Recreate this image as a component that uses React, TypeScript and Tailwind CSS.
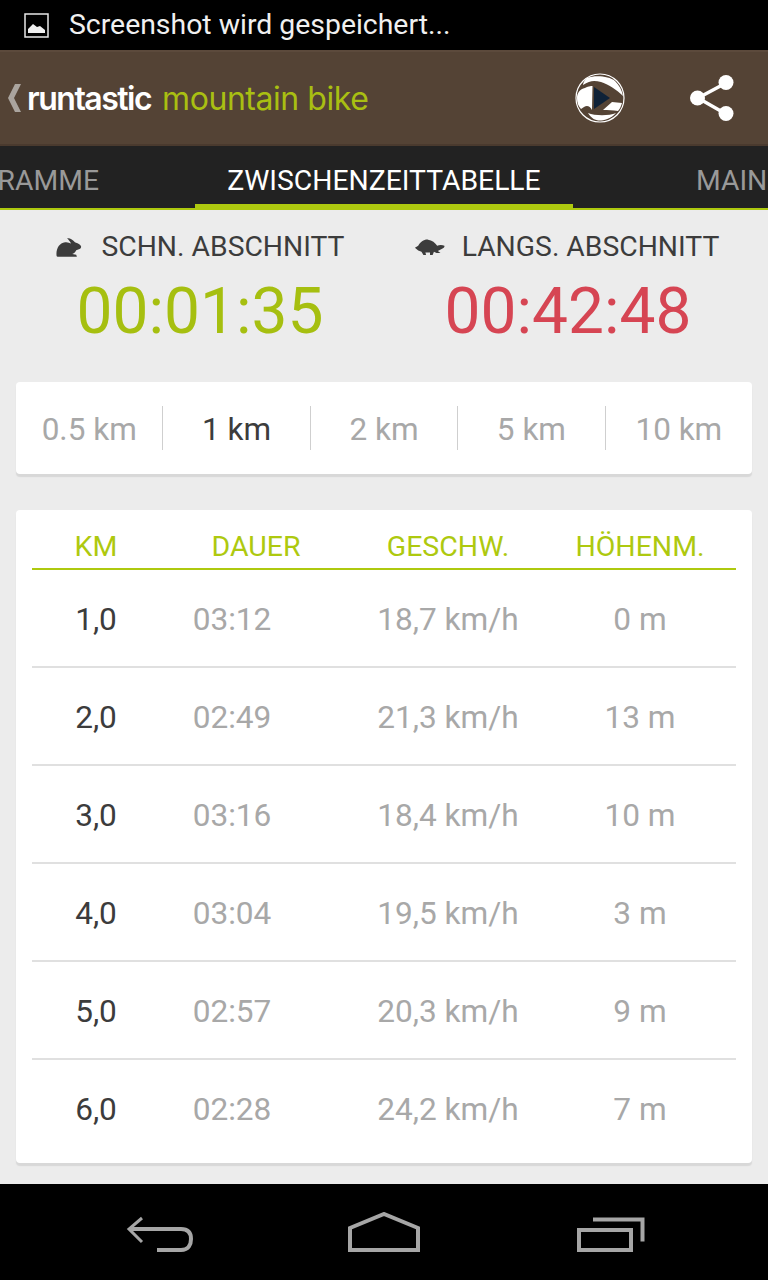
const splits = [
  { km: "1,0", time: "03:12", speed: "18,7 km/h", height: "0 m" },
  { km: "2,0", time: "02:49", speed: "21,3 km/h", height: "13 m" },
  { km: "3,0", time: "03:16", speed: "18,4 km/h", height: "10 m" },
  { km: "4,0", time: "03:04", speed: "19,5 km/h", height: "3 m" },
  { km: "5,0", time: "02:57", speed: "20,3 km/h", height: "9 m" },
  { km: "6,0", time: "02:28", speed: "24,2 km/h", height: "7 m" },
];

const distances = ["0.5 km", "1 km", "2 km", "5 km", "10 km"];

const Rabbit = () => (
  <svg width="28" height="21" viewBox="20 18 84 64" fill="#3c3c3c">
    <path d="M24 74C22 55 32 36 50 34C58 33 64 36 68 38C66 32 60 26 56 22C64 20 74 26 80 34C84 36 92 38 96 42C100 46 100 50 96 54C92 56 88 56 84 58C82 64 76 68 72 70L84 72L86 78L30 78C26 78 24 76 24 74Z" />
  </svg>
);

const Turtle = () => (
  <svg width="32" height="19" viewBox="12 22 96 58" fill="#3c3c3c">
    <path d="M14 52L24 46C30 34 42 26 54 27C66 28 76 36 82 46C88 42 98 42 104 46C106 50 100 54 94 56L84 62L92 68L80 68L72 64L68 74L60 74L60 66L46 66L48 74L40 74L34 64L24 60Z" />
  </svg>
);

export default function App() {
  return (
    <div className="w-[768px] h-[1280px] flex flex-col bg-[#ececec] overflow-hidden font-['Roboto',sans-serif]">
      {/* Status bar */}
      <div className="h-[50px] bg-black flex items-center pl-6 gap-[20px]">
        <svg width="25" height="25" viewBox="0 0 25 25">
          <rect x="1" y="1" width="23" height="23" fill="none" stroke="#e8e8e8" strokeWidth="1.5" />
          <path d="M4 20v-4l5-5 4 3 3-1 5 4v3z" fill="#f0f0f0" />
        </svg>
        <span className="text-[#f0f0f0] text-[28.4px]">Screenshot wird gespeichert...</span>
      </div>

      {/* Action bar */}
      <div className="h-[96px] bg-[#544335] border-t-2 border-b-2 border-t-[#5c4a3c] border-b-[#4a3a2e] flex items-center">
        <svg className="ml-[8px]" width="14" height="28" viewBox="0 0 14 28">
          <path d="M7 0h6L6 14l7 14H7L0 14z" fill="#aaa49e" />
        </svg>
        <span className="ml-[5px] text-white text-[32px] font-semibold font-['Inter',sans-serif] tracking-[-1.5px] pt-[2px]">runtastic</span>
        <span className="ml-[11px] text-[#a9bf12] text-[32px] font-['Inter',sans-serif] tracking-[-0.45px] pt-[2px]">mountain bike</span>
        <div className="ml-auto flex items-center">
          {/* app badge */}
          <svg width="50" height="50" viewBox="0 0 50 50">
            <circle cx="25" cy="25" r="24" fill="#544335" stroke="#fff" strokeWidth="1.2" />
            <path d="M12 5C20 2 34 3 40 8C44 12 47 17 48 23C42 17 33 11 26 9C20 7.5 15 7 8 12C8 9 10 7 12 5Z" fill="#fff" />
            <path d="M2 25C2 20 5 16 10 15C14 13 17 13 17.500 13L17 37C15 33 12 32 9 34L6 36C3 33 2 29 2 25Z" fill="#fff" />
            <path d="M28 37L37 29L47 30C46 33 45 36 43 38C38 37 33 37 28 37Z" fill="#fff" />
            <path d="M13 40C20 43 34 43 41 40C36 46 28 47.500 25 47.500C20 47.500 16 45 13 40Z" fill="#fff" />
            <path d="M19 14L35 25L19 36Z" fill="#0f2238" />
          </svg>
          <svg className="ml-[65px] mr-[32px]" width="46" height="46" viewBox="0 0 46 46" fill="#fff">
            <circle cx="36" cy="7.500" r="7.500" />
            <circle cx="7.500" cy="23" r="7.500" />
            <circle cx="36" cy="38.500" r="7.500" />
            <path d="M8 23L36 8M8 23l28 16" stroke="#fff" strokeWidth="3.500" />
          </svg>
        </div>
      </div>

      {/* Tabs */}
      <div className="h-[64px] bg-[#222222] border-b-2 border-[#aec90f] flex items-center text-[28.3px] leading-none whitespace-nowrap">
        <div className="w-[99px] flex justify-end text-[#999999] pt-[8px]">
          <span>RAMME</span>
        </div>
        <div className="ml-[96px] w-[378px] h-[62px] border-b-[4px] border-[#aec90f] flex items-center justify-center text-white pt-[12px] shrink-0">
          <span>ZWISCHENZEITTABELLE</span>
        </div>
        <span className="ml-[123px] text-[#999999] pt-[8px]">MAIN</span>
      </div>

      {/* Fastest / slowest */}
      <div className="flex pt-[22px] h-[172px] px-[16px]">
        <div className="w-[368px] flex flex-col items-center">
          <div className="flex items-center gap-[18px] text-[28.3px] leading-[30px] text-[#3c3c3c]">
            <Rabbit />
            <span>SCHN. ABSCHNITT</span>
          </div>
          <div className="mt-[11px] text-[#a6bf10] text-[64px] leading-[78px]">00:01:35</div>
        </div>
        <div className="w-[368px] flex flex-col items-center">
          <div className="flex items-center gap-[16px] text-[28.3px] leading-[30px] text-[#3c3c3c] pr-[3px]">
            <Turtle />
            <span>LANGS. ABSCHNITT</span>
          </div>
          <div className="mt-[11px] text-[#d64553] text-[64px] leading-[78px]">00:42:48</div>
        </div>
      </div>

      {/* Distance filter */}
      <div className="mx-[16px] h-[92px] bg-white rounded-[4px] shadow-[0_3px_1px_#d8d8d8] flex items-center">
        {distances.map((d, i) => (
          <div
            key={d}
            className={`flex-1 h-[44px] flex items-center justify-center text-[31.5px] pt-[3px] ${i > 0 ? "border-l border-[#cfcfcf]" : ""} ${i === 1 ? "text-[#3c3c3c]" : "text-[#a8a8a8]"}`}
          >
            {d}
          </div>
        ))}
      </div>

      {/* Split table */}
      <div className="mt-[36px] mx-[16px] h-[653px] bg-white rounded-[4px] shadow-[0_3px_1px_#d8d8d8] px-[16px]">
        <div className="h-[60px] grid grid-cols-[128px_192px_192px_192px] items-end pb-[6px] border-b-2 border-[#aec90f] text-[28.5px] leading-[30px] text-[#aec90f] text-center">
          <span>KM</span>
          <span>DAUER</span>
          <span>GESCHW.</span>
          <span>HÖHENM.</span>
        </div>
        {splits.map((s, i) => (
          <div
            key={s.km}
            className={`h-[98px] grid grid-cols-[128px_192px_192px_192px] items-center text-center text-[31.6px] text-[#a8a8a8] pt-[3px] border-b-2 ${i < 5 ? "border-[#e0e0e0]" : "border-transparent"}`}
          >
            <span className="text-[#3c3c3c]">{s.km}</span>
            <span className="pr-[48px]">{s.time}</span>
            <span>{s.speed}</span>
            <span>{s.height}</span>
          </div>
        ))}
      </div>

      {/* Navigation bar */}
      <div className="mt-auto h-[96px] bg-black flex items-center">
        <svg className="ml-[126px]" width="68" height="40" viewBox="0 0 68 40" fill="none" stroke="#a6a6a6" strokeWidth="4">
          <path d="M16 6L3 17l13 13" strokeWidth="3" />
          <path d="M3 17h52c8 0 10 5 10 10s-2 11-10 11H31" />
        </svg>
        <svg className="ml-[154px]" width="72" height="40" viewBox="0 0 72 40" fill="none" stroke="#a6a6a6" strokeWidth="4">
          <path d="M2 38V16L36 2l34 14v22z" />
        </svg>
        <svg className="ml-[157px]" width="68" height="40" viewBox="0 0 68 40" fill="none" stroke="#a6a6a6" strokeWidth="4">
          <path d="M2 18h52v20H2z" />
          <path d="M16 7.500h49.500v22" />
        </svg>
      </div>
    </div>
  );
}
